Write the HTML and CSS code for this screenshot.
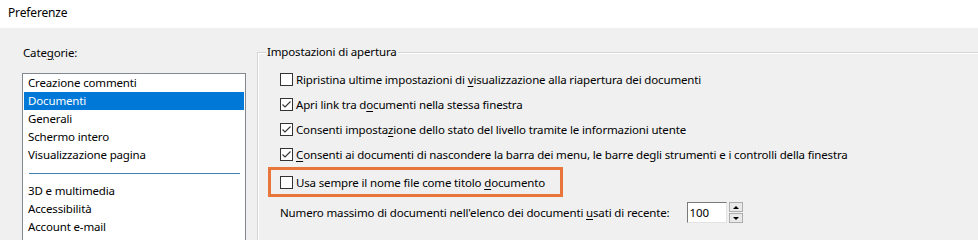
FILE: index.html
```html
<!DOCTYPE html>
<html lang="it">
<head>
<meta charset="utf-8">
<title>Preferenze</title>
<link rel="stylesheet" href="styles.css">
</head>
<body>
<div class="titlebar">Preferenze</div>
<div class="main">
  <div class="cats">
    <div class="cats-label">Cate<u>g</u>orie:</div>
    <div class="list">
      <div class="item">Creazione commenti</div>
      <div class="item selected">Documenti</div>
      <div class="item">Generali</div>
      <div class="item">Schermo intero</div>
      <div class="item">Visualizzazione pagina</div>
      <div class="sep"><span class="sep-line"></span></div>
      <div class="item">3D e multimedia</div>
      <div class="item">Accessibilità</div>
      <div class="item">Account e-mail</div>
    </div>
  </div>
  <div class="group">
    <div class="legend">Impostazioni di apertura</div>
    <div class="opts">
      <div class="opt"><span class="cb"></span><span>Ripristina ultime impostazioni di <u>v</u>isualizzazione alla riapertura dei documenti</span></div>
      <div class="opt"><span class="cb checked"><svg viewBox="0 0 11 11" width="11" height="11"><polyline points="1.5,5.5 4,8 9.5,2.5" fill="none" stroke="#333" stroke-width="1.1"/></svg></span><span>Apri link tra d<u>o</u>cumenti nella stessa finestra</span></div>
      <div class="opt"><span class="cb checked"><svg viewBox="0 0 11 11" width="11" height="11"><polyline points="1.5,5.5 4,8 9.5,2.5" fill="none" stroke="#333" stroke-width="1.1"/></svg></span><span>Consenti imposta<u>z</u>ione dello stato del livello tramite le informazioni utente</span></div>
      <div class="opt"><span class="cb checked"><svg viewBox="0 0 11 11" width="11" height="11"><polyline points="1.5,5.5 4,8 9.5,2.5" fill="none" stroke="#333" stroke-width="1.1"/></svg></span><span><u>C</u>onsenti ai documenti di nascondere la barra dei menu, le barre degli strumenti e i controlli della finestra</span></div>
      <div class="opt highlight"><span class="cb"></span><span>Usa sempre il nome file come titolo <u>d</u>ocumento</span></div>
      <div class="opt num">
        <span>Numero massimo di documenti nell'elenco dei documenti <u>u</u>sati di recente:</span>
        <span class="numbox">100</span>
        <span class="spin">
          <span class="spin-btn"><span class="tri up"></span></span>
          <span class="spin-btn"><span class="tri down"></span></span>
        </span>
      </div>
    </div>
  </div>
</div>
</body>
</html>
```

FILE: styles.css
```css
html, body {
  margin: 0;
  padding: 0;
  height: 240px;
  overflow: hidden;
  background: #f0f0f0;
  font-family: "Noto Sans", "Open Sans", sans-serif;
  font-size: 11.5px;
  letter-spacing: -0.15px;
  color: #000;
}

u { text-decoration: underline; text-underline-offset: 2px; }

.titlebar {
  height: 28px;
  background: #fff;
  padding-left: 8px;
  line-height: 26px;
  font-size: 12px;
  box-sizing: border-box;
}

.main {
  display: flex;
  padding-top: 16px;
  height: 212px;
  box-sizing: border-box;
}

.cats {
  margin-left: 22px;
  width: 224px;
  flex: none;
  display: flex;
  flex-direction: column;
}

.cats-label {
  line-height: 18px;
  height: 18px;
  padding-left: 1px;
  margin-bottom: 11px;
}

.list {
  flex: 1;
  background: #fff;
  border: 1px solid #828790;
  border-bottom: none;
  padding: 0 1px;
  overflow: hidden;
}

.item {
  height: 18px;
  line-height: 18px;
  padding-left: 4px;
  white-space: nowrap;
}

.item.selected {
  background: #0078d7;
  color: #fff;
}

.sep {
  height: 18px;
  display: flex;
  align-items: center;
  padding: 0 4px 0 5px;
}

.sep-line {
  flex: 1;
  height: 1px;
  background: #3c7fb1;
}

.group {
  flex: 1;
  margin-left: 11px;
  margin-top: 8px;
  border-top: 1px solid #d5d5d5;
  border-left: 1px solid #d5d5d5;
  box-shadow: inset 1px 1px 0 #fff;
}

.legend {
  display: table;
  margin-top: -10px;
  margin-left: 8px;
  padding: 0 1px;
  line-height: 18px;
  background: #f0f0f0;
}

.opts {
  display: flex;
  flex-direction: column;
  align-items: flex-start;
  margin-top: 6px;
  padding-left: 22px;
}

.opt {
  height: 25px;
  display: flex;
  align-items: center;
  white-space: nowrap;
}

.cb {
  width: 13px;
  height: 13px;
  box-sizing: border-box;
  border: 1px solid #333;
  background: #fff;
  margin-right: 3px;
  display: flex;
  align-items: center;
  justify-content: center;
  flex: none;
}

.cb svg { display: block; }

.opt.highlight {
  margin-left: -12px;
  border: 3px solid #e8753a;
  padding: 0 15px 0 9px;
  height: 30px;
  box-sizing: border-box;
}

.opt.num {
  margin-top: 3px;
}

.numbox {
  margin-left: 17px;
  width: 40px;
  height: 21px;
  box-sizing: border-box;
  background: #fff;
  border-top: 1px solid #7a7a7a;
  border-left: 1px solid #7a7a7a;
  border-right: 1px solid #e3e3e3;
  border-bottom: 1px solid #e3e3e3;
  padding-left: 2px;
  line-height: 19px;
}

.spin {
  margin-left: 2px;
  display: flex;
  flex-direction: column;
  gap: 1px;
  height: 21px;
}

.spin-btn {
  width: 14px;
  height: 10px;
  box-sizing: border-box;
  border: 1px solid #acacac;
  background: #e9e9e9;
  display: flex;
  align-items: center;
  justify-content: center;
}

.tri {
  width: 0;
  height: 0;
  border-left: 3px solid transparent;
  border-right: 3px solid transparent;
}

.tri.up { border-bottom: 3px solid #000; }
.tri.down { border-top: 3px solid #000; }
```
